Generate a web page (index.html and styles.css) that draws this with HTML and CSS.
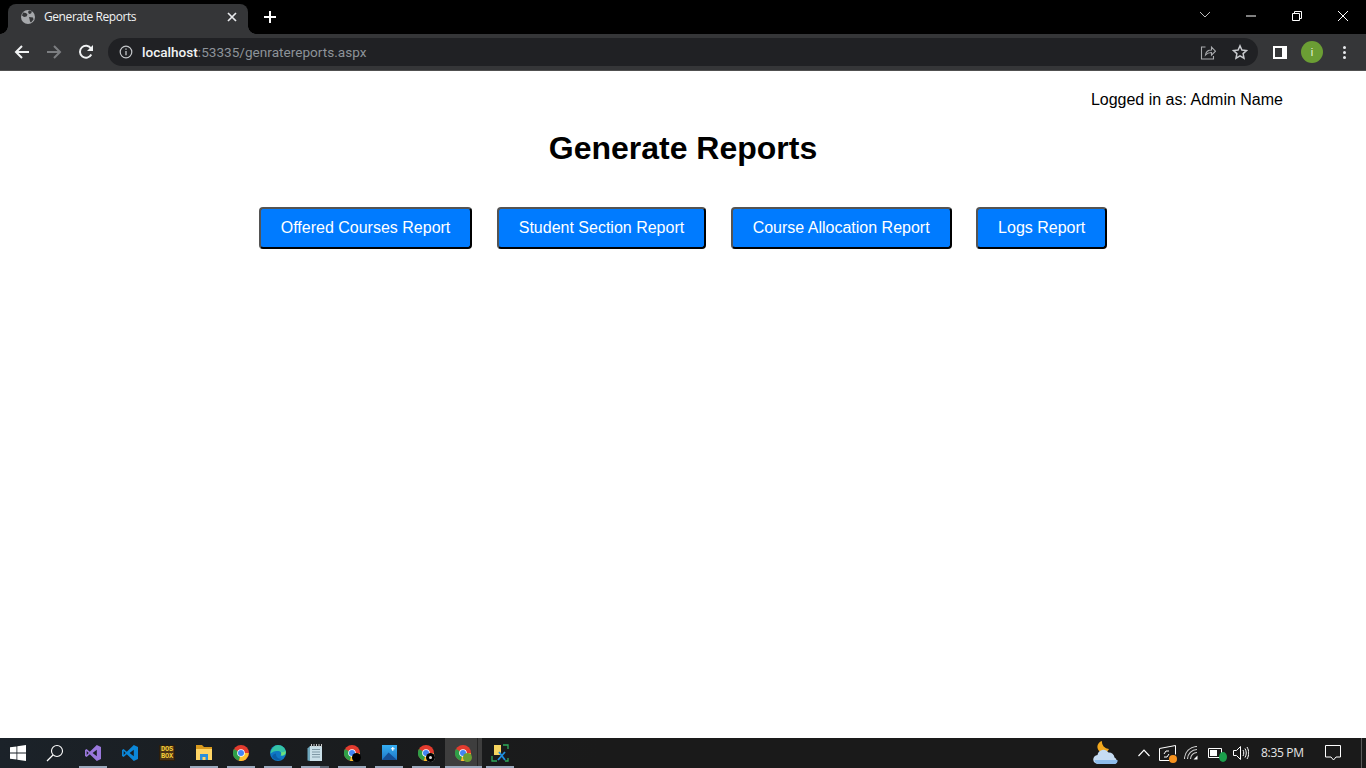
FILE: index.html
```html
<!DOCTYPE html>
<html lang="en">
<head>
<meta charset="utf-8">
<title>Generate Reports</title>
<link rel="stylesheet" href="styles.css">
</head>
<body>
<div class="screen">
  <header class="browser">
    <div class="tabstrip">
      <div class="tab">
        <svg class="favicon" viewBox="0 0 16 16" width="16" height="16"><circle cx="8" cy="8" r="7" fill="#a6a8ab"/><path d="M3 3.500l3 .5 1.500 1.500-1 2-2.500.5-2-1.500zM9 1.500l3 1-1 2-2 .5-1-2zM9 8l4 .5.500 2-2.500 3-1-1-.5-2.500z" fill="#353638"/></svg>
        <span class="tab-title">Generate Reports</span>
        <svg class="tab-close" viewBox="0 0 10 10" width="10" height="10"><path d="M1 1l8 8M9 1l-8 8" stroke="#e8eaed" stroke-width="1.700"/></svg>
      </div>
      <svg class="new-tab" viewBox="0 0 12 12" width="12" height="12"><path d="M6 0v12M0 6h12" stroke="#fff" stroke-width="2"/></svg>
      <div class="window-controls">
        <svg viewBox="0 0 46 20" width="46" height="20"><path d="M18 6l5 5 5-5" fill="none" stroke="#bdbdbd" stroke-width="1"/></svg>
        <svg viewBox="0 0 46 20" width="46" height="20"><path d="M18 10h10" stroke="#fff" stroke-width="1"/></svg>
        <svg viewBox="0 0 46 20" width="46" height="20"><path d="M18.500 7.500h7v7h-7zM20.500 7.500v-2h7v7h-2" fill="none" stroke="#fff" stroke-width="1"/></svg>
        <svg viewBox="0 0 46 20" width="46" height="20"><path d="M18 5l10 10M28 5l-10 10" stroke="#fff" stroke-width="1"/></svg>
      </div>
    </div>
    <div class="toolbar">
      <svg class="nav" viewBox="0 0 16 16" width="16" height="16"><path d="M15 8H2M8 2L2 8l6 6" fill="none" stroke="#f1f3f4" stroke-width="2"/></svg>
      <svg class="nav" viewBox="0 0 16 16" width="16" height="16"><path d="M1 8h13M8 2l6 6-6 6" fill="none" stroke="#7c7e81" stroke-width="2"/></svg>
      <svg class="nav" viewBox="0 0 16 16" width="16" height="16"><path d="M13.300 10.500A6 6 0 1 1 13 4.500" fill="none" stroke="#f1f3f4" stroke-width="2"/><path d="M15 1v6H9z" fill="#f1f3f4"/></svg>
      <div class="omnibox">
        <svg class="info" viewBox="0 0 14 14" width="14" height="14"><circle cx="7" cy="7" r="5.800" fill="none" stroke="#c4c7ca" stroke-width="1.200"/><path d="M7 6v4.200M7 3.500v1.300" stroke="#c4c7ca" stroke-width="1.300"/></svg>
        <span class="url"><span class="host">localhost</span>:53335/genratereports.aspx</span>
        <svg class="omni-share" viewBox="0 0 16 16" width="16" height="16"><path d="M5.500 3H1.500v12h12v-3" fill="none" stroke="#a9abae" stroke-width="1.100"/><path d="M5.500 11c.5-3.500 3-5 6-5V3l4 4.200-4 4V8.500c-2.500 0-4.500.8-6 2.500z" fill="none" stroke="#a9abae" stroke-width="1.100"/></svg>
        <svg class="omni-star" viewBox="0 0 16 16" width="16" height="16"><path d="M8 1.800l1.900 4.200 4.600.5-3.400 3.100.9 4.600L8 11.900l-4 2.300.9-4.600L1.500 6.500 6.100 6z" fill="none" stroke="#c9cbce" stroke-width="1.500"/></svg>
      </div>
      <span class="panel-icon"></span>
      <span class="avatar">i</span>
      <span class="dots"><i></i><i></i><i></i></span>
    </div>
  </header>

  <main class="page">
    <p class="user">Logged in as: Admin Name</p>
    <h1 class="title">Generate Reports</h1>
    <div class="actions">
      <button class="report-btn">Offered Courses Report</button>
      <button class="report-btn">Student Section Report</button>
      <button class="report-btn">Course Allocation Report</button>
      <button class="report-btn">Logs Report</button>
    </div>
  </main>

  <footer class="taskbar">
    <div class="start">
      <svg viewBox="0 0 16 16" width="16" height="16"><path d="M0 2.300l6.500-.9v6.200H0zM7.300 1.300L16 0v7.600H7.300zM0 8.400h6.500v6.200L0 13.700zM7.300 8.400H16V16l-8.700-1.300z" fill="#fff"/></svg>
      <svg viewBox="0 0 18 18" width="18" height="18"><circle cx="11" cy="7" r="5.500" fill="none" stroke="#fff" stroke-width="1.100"/><path d="M7 11l-6 6" stroke="#fff" stroke-width="1.300"/></svg>
    </div>
    <div class="apps">
      <span class="app open"><svg viewBox="0 0 18 18" width="18" height="18"><path d="M12.800 1L17 3v12l-4.200 2-7-6.800L2.600 13 1 12V6l1.600-1 3.200 2.800zM12.800 5.700L8.600 9l4.200 3.300zM2.700 7v4l2-2z" fill="#9a78dc"/></svg></span>
      <span class="app"><svg viewBox="0 0 18 18" width="18" height="18"><path d="M12.800 1L17 3v12l-4.200 2-7-6.800L2.600 13 1 12V6l1.600-1 3.200 2.800zM12.800 5.700L8.600 9l4.200 3.300zM2.700 7v4l2-2z" fill="#0b87d8"/></svg></span>
      <span class="app"><span class="dos">DOS<br>BOX</span></span>
      <span class="app open"><svg viewBox="0 0 16 16" width="16" height="16"><path d="M0 0h6l2 2h8v3H0z" fill="#d99a1e"/><path d="M0 4h16v11H0z" fill="#ffd566"/><path d="M4 9h8v6h-2.500v-3h-3v3H4z" fill="#2a8fdc"/></svg></span>
      <span class="app open"><svg viewBox="0 0 16 16" width="16" height="16"><use href="#chrome"/></svg></span>
      <span class="app open"><svg viewBox="0 0 16 16" width="16" height="16"><circle cx="8" cy="8" r="8" fill="#0f77c4"/><path d="M.5 8.500C1 3 5 0 8 0c4 0 8 3 8 8 0 2-2.500 3-5 2.500 1-1.500.5-4-2.500-4.500-4-.5-6 1-8 2.500z" fill="#35c4a5"/><path d="M15.500 6c.5 2.500-1.500 5-5 4.500 1-1 1-2.500.5-3.500 1.500.5 3 .5 4.500-1z" fill="#6fe07a"/><path d="M6 9.500c0 3 3 5 6 4-4 3-9 1-10-2 1-2 2.500-3 4-3z" fill="#0a5ea8"/></svg></span>
      <span class="app open stacked"><svg viewBox="0 0 16 18" width="16" height="18"><path d="M3 2h12v15H3z" fill="#c9dfe8"/><path d="M.5 4.500L3 2v15l-2.500-.5z" fill="#6fa7bd"/><path d="M5 5.500h8M5 8h8M5 10.500h8M5 13h8" stroke="#7f98a5" stroke-width="1"/><path d="M4.500 0v3M7 0v3M9.500 0v3M12 0v3M14.500 0v3" stroke="#c8c8c8" stroke-width="1"/></svg></span>
      <span class="app open"><svg viewBox="0 0 16 16" width="16" height="16"><use href="#chrome"/></svg><i class="badge black"></i></span>
      <span class="app open"><svg viewBox="0 0 16 16" width="15" height="15"><defs><linearGradient id="sky" x1="0" y1="0" x2="0" y2="1"><stop offset="0" stop-color="#35aef2"/><stop offset="1" stop-color="#1f78c8"/></linearGradient></defs><path d="M0 0h16v16H0z" fill="url(#sky)"/><path d="M0 16l7-8 9 8z" fill="#154f96"/><path d="M11.500 2v4M9.500 4h4" stroke="#fff" stroke-width="1.300"/></svg></span>
      <span class="app open"><svg viewBox="0 0 16 16" width="16" height="16"><use href="#chrome"/></svg><i class="badge black ring"></i></span>
      <span class="app open active"><svg viewBox="0 0 16 16" width="16" height="16"><use href="#chrome"/></svg><i class="badge green"></i></span>
      <span class="app open"><svg viewBox="0 0 18 18" width="18" height="18"><path d="M3 1h7v10H3z" fill="#f6d45f"/><path d="M1 12v5h5M12 1h5v4M17 14v3h-3" fill="none" stroke="#2faa5a" stroke-width="1.300"/><path d="M7 16l7-8M8 8l6 8" stroke="#1f8fe0" stroke-width="1.800"/></svg></span>
    </div>
    <div class="tray">
      <svg class="t-weather" viewBox="0 0 26 24" width="26" height="24"><path d="M9 0a6 6 0 1 0 7 8A7 7 0 0 1 9 0z" fill="#f2a81d"/><path d="M5 23a4.500 4.500 0 0 1-.5-9 6 6 0 0 1 11-2.500 5.500 5.500 0 0 1 6 5A3.700 3.700 0 0 1 22 23z" fill="#c6dcf3"/><path d="M1.500 19h23a3.700 3.700 0 0 1-2.500 4H5a4.500 4.500 0 0 1-3.500-4z" fill="#8dbceb"/></svg>
      <svg class="t-caret" viewBox="0 0 12 8" width="12" height="8"><path d="M.5 7L6 1.200 11.500 7" fill="none" stroke="#fff" stroke-width="1.200"/></svg>
      <span class="t-box"><svg viewBox="0 0 17 17" width="17" height="17"><path d="M.5 3.500L16.500.5v9M.5 3.500v12h10" fill="none" stroke="#fff" stroke-width="1"/><path d="M5 9l2-3h3M10 9l-2 3H5" fill="none" stroke="#fff" stroke-width="1"/></svg><i class="orange"></i></span>
      <svg class="t-wifi" viewBox="0 0 14 14" width="14" height="14"><path d="M.5 13A12.500 12.500 0 0 1 13 .5M3.500 13A9.500 9.500 0 0 1 13 3.500M6.500 13A6.500 6.500 0 0 1 13 6.500" fill="none" stroke="#cfcfcf" stroke-width="1.100"/><path d="M9.500 13.500h4v-4z" fill="#fff"/></svg>
      <span class="t-batt"><svg viewBox="0 0 17 13" width="17" height="13"><path d="M.5 1.500h13v9H.5z" fill="none" stroke="#fff" stroke-width="1"/><path d="M2 3h7v6H2z" fill="#fff"/></svg><i class="leaf"></i></span>
      <svg class="t-vol" viewBox="0 0 16 16" width="16" height="16"><path d="M.5 5.500h3L7.500 1.500v13l-4-4h-3z" fill="none" stroke="#fff" stroke-width="1"/><path d="M10 5c1 2 1 4 0 6M12 3.500c1.700 3 1.700 6 0 9M14 2c2.300 4 2.300 8 0 12" fill="none" stroke="#fff" stroke-width="1"/></svg>
      <span class="clock">8:35 PM</span>
      <svg class="t-note" viewBox="0 0 17 16" width="17" height="16"><path d="M.5.500h15v11.500h-4.500l-2.500 3-2.500-3H.5z" fill="none" stroke="#fff" stroke-width="1"/></svg>
      <span class="desk-line"></span>
    </div>
  </footer>
</div>
<svg class="defs" width="0" height="0">
  <symbol id="chrome" viewBox="0 0 16 16">
    <circle cx="8" cy="8" r="8" fill="#e33b2e"/>
    <path d="M8 8L1 4A8 8 0 0 0 6 15.800z" fill="#2f9e47"/>
    <path d="M8 8h7.800A8 8 0 0 1 6 15.800z" fill="#fbc02d"/>
    <circle cx="8" cy="8" r="3.800" fill="#fff"/>
    <circle cx="8" cy="8" r="3" fill="#4285f4"/>
  </symbol>
</svg>
</body>
</html>
```

FILE: styles.css
```css
* { box-sizing: border-box; }
html, body { margin: 0; height: 100%; overflow: hidden; }
body { background: #fff; font-family: "Liberation Sans", Arial, sans-serif; color: #000; }
.defs { display: block; height: 0; }
.screen { display: flex; flex-direction: column; height: 768px; overflow: hidden; }

/* Browser chrome */
.browser { flex: none; height: 71px; background: #000; display: flex; flex-direction: column; }
.tabstrip { height: 34px; display: flex; align-items: flex-end; padding-left: 8px; }
.tab { position: relative; width: 240px; height: 30px; background: #353638; border-radius: 8px 8px 0 0; display: flex; align-items: center; padding: 0 11px 4px 12px; color: #f1f3f4; }
.tab::before, .tab::after { content: ""; position: absolute; bottom: 0; width: 8px; height: 8px; }
.tab::before { left: -8px; background: radial-gradient(circle at 0 0, transparent 7.500px, #353638 8px); }
.tab::after { right: -8px; background: radial-gradient(circle at 100% 0, transparent 7.500px, #353638 8px); }
.favicon { flex: none; }
.tab-title { font: 12px/16px "Open Sans", "Noto Sans", sans-serif; margin-left: 8px; flex: 1; white-space: nowrap; letter-spacing: -.42px; }
.new-tab { margin: 0 0 11px 16px; flex: none; }
.window-controls { margin-left: auto; align-self: flex-start; display: flex; padding-top: 6px; }
.toolbar { height: 37px; background: #353638; border-bottom: 1px solid #505050; display: flex; align-items: center; padding-left: 14px; }
.nav { flex: none; margin-right: 16px; }
.omnibox { flex: none; width: 1150px; height: 28px; margin-left: -2px; border-radius: 14px; background: #202124; display: flex; align-items: center; padding: 0 10px 0 11px; }
.info { flex: none; }
.url { font: 13.600px/20px Roboto, "Liberation Sans", sans-serif; color: #8d9399; margin-left: 9px; flex: 1; white-space: nowrap; }
.host { color: #f1f3f4; font-weight: 500; }
.omni-share { margin-right: 16px; }
.panel-icon { flex: none; width: 14px; height: 13px; margin-left: 15px; border: 2px solid #fff; border-right-width: 5px; background: #353638; }
.avatar { flex: none; width: 22px; height: 22px; margin-left: 14px; border-radius: 50%; background: #6b9e34; color: #e9f3d8; font: 11px/22px "Liberation Sans", sans-serif; text-align: center; }
.dots { flex: none; display: flex; flex-direction: column; gap: 2px; margin-left: 20px; }
.dots i { width: 3px; height: 3px; background: #e8eaed; border-radius: 50%; }

/* Page */
.page { flex: 1; background: #fff; min-height: 0; }
.user { margin: 0; padding: 20px 83px 0 0; text-align: right; font-size: 16px; line-height: 18px; }
.title { margin: 21px 0 0; text-align: center; font-size: 32px; line-height: 37px; font-weight: 700; }
.actions { text-align: center; margin-top: 30px; }
.report-btn { margin: 10px; padding: 10px 20px; font: 16px/18px "Liberation Sans", Arial, sans-serif; color: #fff; background: #007bff; border: 2px outset #000; border-radius: 4px; }

/* Taskbar */
.taskbar { flex: none; height: 30px; background: linear-gradient(90deg, #1b2229 0, #1a1d20 260px, #1a1a1a 600px); display: flex; align-items: stretch; }
.start { width: 75px; flex: none; display: flex; align-items: center; padding-left: 10px; gap: 20px; }
.apps { display: flex; flex: none; }
.app { width: 37px; height: 30px; padding: 0 1px 1px 0; display: flex; align-items: center; justify-content: center; position: relative; }
.app.open::after { content: ""; position: absolute; left: 4px; right: 5px; bottom: 0; height: 2px; background: #9aa9bd; }
.app.stacked::before { content: ""; position: absolute; left: 23px; right: 5px; bottom: 0; height: 2px; background: #5d6875; z-index: 1; }
.app.active { background: #3e3e3e; }
.app.active::after { left: 0; right: 0; }
.app.active::before { content: ""; position: absolute; right: 4px; top: 0; bottom: 0; width: 1px; background: #262626; }
.dos { display: block; width: 16px; height: 16px; background: #4a3315; border: 1px solid #2b1d0c; color: #f5cf3a; font: 700 7px/7px "Liberation Mono", monospace; letter-spacing: -.2px; text-align: center; overflow: hidden; }
.badge { position: absolute; width: 9px; height: 9px; border-radius: 50%; left: 18px; top: 15px; }
.badge.black { background: #000; }
.badge.ring { box-shadow: inset 0 0 0 3px #000; background: #ddd; }
.badge.green { background: #6b9e34; }
.tray { margin-left: auto; display: flex; align-items: center; position: relative; flex: none; width: 274px; }
.t-weather { margin-left: 1px; flex: none; }
.t-caret { margin-left: 19px; flex: none; }
.t-box { margin-left: 9px; position: relative; display: flex; flex: none; }
.orange { position: absolute; width: 8px; height: 8px; border-radius: 50%; background: #f7931e; right: -1px; bottom: -1px; }
.t-wifi { margin-left: 8px; flex: none; }
.t-batt { margin-left: 10px; position: relative; display: flex; flex: none; }
.leaf { position: absolute; width: 8px; height: 10px; border-radius: 50%; background: #1b9e4b; right: -2px; bottom: -2px; }
.t-vol { margin-left: 8px; flex: none; }
.clock { margin-left: 12px; font: 12px/16px "Open Sans", "Noto Sans", sans-serif; color: #e6e6e6; white-space: nowrap; letter-spacing: -.3px; flex: none; }
.t-note { margin-left: 21px; flex: none; }
.desk-line { position: absolute; right: 4px; top: 0; width: 1px; height: 30px; background: #5a5a5a; }
```
